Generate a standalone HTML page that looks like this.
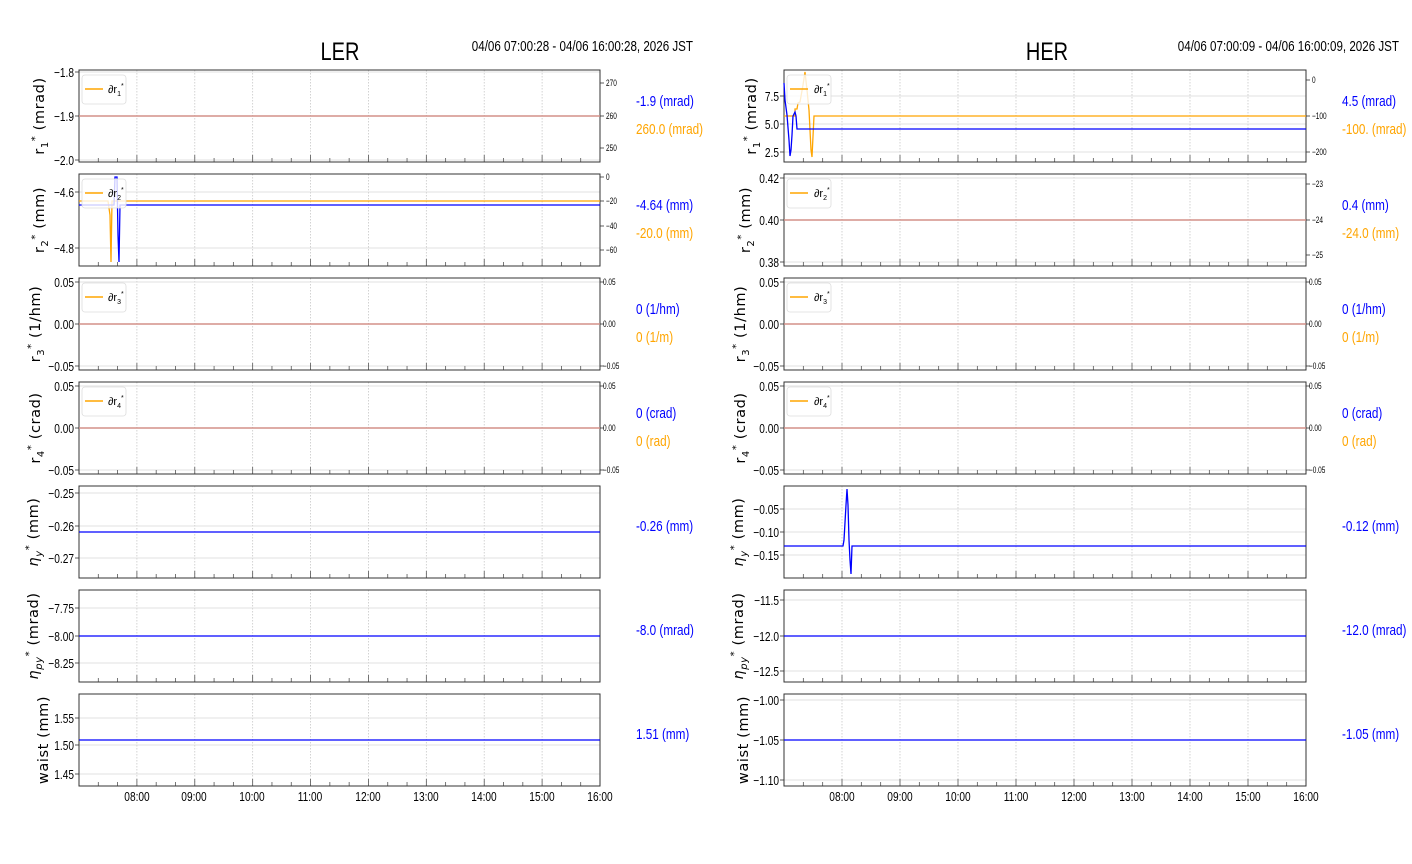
<!DOCTYPE html>
<html><head><meta charset="utf-8"><style>
html,body{margin:0;padding:0;background:#fff;}
svg{display:block}
text{font-family:"Liberation Sans",sans-serif;font-size:13px;fill:#000}
.sm text{font-size:9px}
.yl text{font-family:"DejaVu Sans",sans-serif;font-size:14.5px;letter-spacing:0.6px}
.t text{font-size:11px}
text.b{fill:#0000ff;font-size:15px}
text.o{fill:#ffa500;font-size:15px}
text.ttl{font-size:25px}
text.dt{font-size:14.5px}
</style></head><body>
<svg id="s" width="1412" height="864" xmlns="http://www.w3.org/2000/svg">
<g id="g"></g>
<text class="ttl n" x="340" y="60" text-anchor="middle">LER</text>
<text class="dt n" x="693" y="51" text-anchor="end">04/06 07:00:28 - 04/06 16:00:28, 2026 JST</text>
<text class="ttl n" x="1047" y="60" text-anchor="middle">HER</text>
<text class="dt n" x="1399" y="51" text-anchor="end">04/06 07:00:09 - 04/06 16:00:09, 2026 JST</text>

<g text-anchor="end" class="lt">
<text x="74" y="77">−1.8</text><text x="74" y="121">−1.9</text><text x="74" y="165">−2.0</text>
<text x="74" y="197">−4.6</text><text x="74" y="253">−4.8</text>
<text x="74" y="287">0.05</text><text x="74" y="329">0.00</text><text x="74" y="371">−0.05</text>
<text x="74" y="391">0.05</text><text x="74" y="433">0.00</text><text x="74" y="475">−0.05</text>
<text x="74" y="498">−0.25</text><text x="74" y="531">−0.26</text><text x="74" y="563">−0.27</text>
<text x="74" y="613">−7.75</text><text x="74" y="641">−8.00</text><text x="74" y="668">−8.25</text>
<text x="74" y="723">1.55</text><text x="74" y="750">1.50</text><text x="74" y="779">1.45</text>
<text x="779" y="101">7.5</text><text x="779" y="129">5.0</text><text x="779" y="157">2.5</text>
<text x="779" y="183">0.42</text><text x="779" y="225">0.40</text><text x="779" y="267">0.38</text>
<text x="779" y="287">0.05</text><text x="779" y="329">0.00</text><text x="779" y="371">−0.05</text>
<text x="779" y="391">0.05</text><text x="779" y="433">0.00</text><text x="779" y="475">−0.05</text>
<text x="779" y="514">−0.05</text><text x="779" y="537">−0.10</text><text x="779" y="560">−0.15</text>
<text x="779" y="605">−11.5</text><text x="779" y="641">−12.0</text><text x="779" y="676">−12.5</text>
<text x="779" y="705">−1.00</text><text x="779" y="745">−1.05</text><text x="779" y="785">−1.10</text>
</g>
<g class="sm">
<text x="606" y="86">270</text><text x="606" y="119">260</text><text x="606" y="151">250</text>
<text x="606" y="180">0</text><text x="606" y="204">−20</text><text x="606" y="229">−40</text><text x="606" y="253">−60</text>
<text x="603" y="285">0.05</text><text x="603" y="327">0.00</text><text x="603" y="369">−0.05</text>
<text x="603" y="389">0.05</text><text x="603" y="431">0.00</text><text x="603" y="473">−0.05</text>
<text x="1312" y="83">0</text><text x="1312" y="119">−100</text><text x="1312" y="155">−200</text>
<text x="1312" y="187">−23</text><text x="1312" y="223">−24</text><text x="1312" y="258">−25</text>
<text x="1309" y="285">0.05</text><text x="1309" y="327">0.00</text><text x="1309" y="369">−0.05</text>
<text x="1309" y="389">0.05</text><text x="1309" y="431">0.00</text><text x="1309" y="473">−0.05</text>
</g>
<g text-anchor="middle" class="xl">
<text x="137" y="801">08:00</text><text x="194" y="801">09:00</text><text x="252" y="801">10:00</text><text x="310" y="801">11:00</text><text x="368" y="801">12:00</text><text x="426" y="801">13:00</text><text x="484" y="801">14:00</text><text x="542" y="801">15:00</text><text x="600" y="801">16:00</text>
<text x="842" y="801">08:00</text><text x="900" y="801">09:00</text><text x="958" y="801">10:00</text><text x="1016" y="801">11:00</text><text x="1074" y="801">12:00</text><text x="1132" y="801">13:00</text><text x="1190" y="801">14:00</text><text x="1248" y="801">15:00</text><text x="1306" y="801">16:00</text>
</g>
<g class="yl" text-anchor="middle">
<text transform="translate(44,116) rotate(-90)">r<tspan dy="4" font-size="10">1</tspan><tspan dy="-10" font-size="10">*</tspan><tspan dy="6"> (mrad)</tspan></text>
<text transform="translate(44,220) rotate(-90)">r<tspan dy="4" font-size="10">2</tspan><tspan dy="-10" font-size="10">*</tspan><tspan dy="6"> (mm)</tspan></text>
<text transform="translate(40,324) rotate(-90)">r<tspan dy="4" font-size="10">3</tspan><tspan dy="-10" font-size="10">*</tspan><tspan dy="6"> (1/hm)</tspan></text>
<text transform="translate(40,428) rotate(-90)">r<tspan dy="4" font-size="10">4</tspan><tspan dy="-10" font-size="10">*</tspan><tspan dy="6"> (crad)</tspan></text>
<text transform="translate(38,532) rotate(-90)"><tspan font-style="italic">η</tspan><tspan dy="4" font-size="10" font-style="italic">y</tspan><tspan dy="-10" font-size="10">*</tspan><tspan dy="6"> (mm)</tspan></text>
<text transform="translate(38,636) rotate(-90)"><tspan font-style="italic">η</tspan><tspan dy="4" font-size="10" font-style="italic">py</tspan><tspan dy="-10" font-size="10">*</tspan><tspan dy="6"> (mrad)</tspan></text>
<text transform="translate(48,740) rotate(-90)">waist (mm)</text>
<text transform="translate(756,116) rotate(-90)">r<tspan dy="4" font-size="10">1</tspan><tspan dy="-10" font-size="10">*</tspan><tspan dy="6"> (mrad)</tspan></text>
<text transform="translate(750,220) rotate(-90)">r<tspan dy="4" font-size="10">2</tspan><tspan dy="-10" font-size="10">*</tspan><tspan dy="6"> (mm)</tspan></text>
<text transform="translate(745,324) rotate(-90)">r<tspan dy="4" font-size="10">3</tspan><tspan dy="-10" font-size="10">*</tspan><tspan dy="6"> (1/hm)</tspan></text>
<text transform="translate(745,428) rotate(-90)">r<tspan dy="4" font-size="10">4</tspan><tspan dy="-10" font-size="10">*</tspan><tspan dy="6"> (crad)</tspan></text>
<text transform="translate(743,532) rotate(-90)"><tspan font-style="italic">η</tspan><tspan dy="4" font-size="10" font-style="italic">y</tspan><tspan dy="-10" font-size="10">*</tspan><tspan dy="6"> (mm)</tspan></text>
<text transform="translate(743,636) rotate(-90)"><tspan font-style="italic">η</tspan><tspan dy="4" font-size="10" font-style="italic">py</tspan><tspan dy="-10" font-size="10">*</tspan><tspan dy="6"> (mrad)</tspan></text>
<text transform="translate(748,740) rotate(-90)">waist (mm)</text>
</g>
<g class="rv">
<text class="b" x="636" y="106">-1.9 (mrad)</text><text class="o" x="636" y="134">260.0 (mrad)</text>
<text class="b" x="636" y="210">-4.64 (mm)</text><text class="o" x="636" y="238">-20.0 (mm)</text>
<text class="b" x="636" y="314">0 (1/hm)</text><text class="o" x="636" y="342">0 (1/m)</text>
<text class="b" x="636" y="418">0 (crad)</text><text class="o" x="636" y="446">0 (rad)</text>
<text class="b" x="636" y="531">-0.26 (mm)</text>
<text class="b" x="636" y="635">-8.0 (mrad)</text>
<text class="b" x="636" y="739">1.51 (mm)</text>
<text class="b" x="1342" y="106">4.5 (mrad)</text><text class="o" x="1342" y="134">-100. (mrad)</text>
<text class="b" x="1342" y="210">0.4 (mm)</text><text class="o" x="1342" y="238">-24.0 (mm)</text>
<text class="b" x="1342" y="314">0 (1/hm)</text><text class="o" x="1342" y="342">0 (1/m)</text>
<text class="b" x="1342" y="418">0 (crad)</text><text class="o" x="1342" y="446">0 (rad)</text>
<text class="b" x="1342" y="531">-0.12 (mm)</text>
<text class="b" x="1342" y="635">-12.0 (mrad)</text>
<text class="b" x="1342" y="739">-1.05 (mm)</text>
</g>
<g id="lines"></g>
<g id="leg"></g>
<g class="t">
<text x="108" y="93">∂r<tspan dy="3" font-size="7">1</tspan><tspan dy="-8" font-size="7">*</tspan></text>
<text x="108" y="197">∂r<tspan dy="3" font-size="7">2</tspan><tspan dy="-8" font-size="7">*</tspan></text>
<text x="108" y="301">∂r<tspan dy="3" font-size="7">3</tspan><tspan dy="-8" font-size="7">*</tspan></text>
<text x="108" y="405">∂r<tspan dy="3" font-size="7">4</tspan><tspan dy="-8" font-size="7">*</tspan></text>
<text x="814" y="93">∂r<tspan dy="3" font-size="7">1</tspan><tspan dy="-8" font-size="7">*</tspan></text>
<text x="814" y="197">∂r<tspan dy="3" font-size="7">2</tspan><tspan dy="-8" font-size="7">*</tspan></text>
<text x="814" y="301">∂r<tspan dy="3" font-size="7">3</tspan><tspan dy="-8" font-size="7">*</tspan></text>
<text x="814" y="405">∂r<tspan dy="3" font-size="7">4</tspan><tspan dy="-8" font-size="7">*</tspan></text>
</g>
</svg>
<script>
var NS="http://www.w3.org/2000/svg";
function el(p,t,a){var e=document.createElementNS(NS,t);for(var k in a)e.setAttribute(k,a[k]);p.appendChild(e);return e;}
var g=document.getElementById('g'),L=document.getElementById('lines'),G=document.getElementById('leg');
var tops=[70,174,278,382,486,590,694];
var yt={0:[[72,116,160],[192,248],[282,324,366],[386,428,470],[493,526,558],[608,636,663],[718,745,774]],
1:[[96,124,152],[178,220,262],[282,324,366],[386,428,470],[509,532,555],[600,636,671],[700,740,780]]};
var rt={0:[[83,116,148],[177,201,226,250],[282,324,366],[386,428,470]],1:[[80,116,152],[184,220,255],[282,324,366],[386,428,470]]};
[[79,600,0],[784,1306,1]].forEach(function(c){
 var x0=c[0],x1=c[1],s=c[2],hw=(x1-x0)/9;
 tops.forEach(function(t,i){
  var b=t+92;
  for(var h=1;h<9;h++){var x=x0+h*hw;el(g,'line',{x1:x,x2:x,y1:t,y2:b,stroke:'#c8c8c8','stroke-width':0.8,'stroke-dasharray':'1.5,1.5'});}
  yt[s][i].forEach(function(y){el(g,'line',{x1:x0,x2:x1,y1:y,y2:y,stroke:'#d8d8d8','stroke-width':0.8});el(g,'line',{x1:x0-4,x2:x0,y1:y,y2:y,stroke:'#333','stroke-width':0.8});});
  for(var m=1;m<27;m++){var x=x0+m*hw/3,maj=m%3==0;el(g,'line',{x1:x,x2:x,y1:b,y2:b-(maj?7:4),stroke:'#555','stroke-width':0.8});}
  if(i<4){rt[s][i].forEach(function(y){el(g,'line',{x1:x1,x2:x1+4,y1:y,y2:y,stroke:'#333','stroke-width':0.8});});
   el(G,'rect',{x:x0+3,y:t+5,width:44,height:29,rx:3,fill:'rgba(255,255,255,0.8)',stroke:'#ddd','stroke-width':0.8});
   el(G,'line',{x1:x0+6,x2:x0+24,y1:t+19,y2:t+19,stroke:'#ffa500','stroke-width':1.5});}
  el(g,'rect',{x:x0,y:t,width:x1-x0,height:92,fill:'none',stroke:'#333','stroke-width':1});
 });
});
function pl(pts,c,w){el(L,'polyline',{points:pts,fill:'none',stroke:c,'stroke-width':w||1.3});}
function hl(x0,x1,y,c){pl(x0+','+y+' '+x1+','+y,c);}
hl(79,600,116,'#0000ff');hl(79,600,116,'#f0a070');
pl('79,201 108,201 110,215 111,262 112,201 600,201','#ffa500');
pl('79,205 114,205 115,177 117,177 118,235 119,262 120,205 600,205','#0000ff');
hl(79,600,324,'#0000ff');hl(79,600,324,'#f0a070');
hl(79,600,428,'#0000ff');hl(79,600,428,'#f0a070');
hl(79,600,532,'#0000ff');hl(79,600,636,'#0000ff');hl(79,600,740,'#0000ff');
pl('784,116 795,116 795,109 797,109 798,103 800,102 803,85 805,72 807,90 809,110 811,150 812,157 814,116 1306,116','#ffa500');
pl('784,83 785,100 787,115 789,140 790,156 791,150 792,135 793,116 795,112 796,116 797,129 1306,129','#0000ff');
hl(784,1306,220,'#0000ff');hl(784,1306,220,'#f0a070');
hl(784,1306,324,'#0000ff');hl(784,1306,324,'#f0a070');
hl(784,1306,428,'#0000ff');hl(784,1306,428,'#f0a070');
pl('784,546 843,546 844,540 846,505 847,489 848,505 849,540 850,560 851,574 852,546 1306,546','#0000ff');
hl(784,1306,636,'#0000ff');hl(784,1306,740,'#0000ff');
function cond(sel,f){document.querySelectorAll(sel).forEach(function(t){var w=t.getComputedTextLength();t.setAttribute('textLength',(w*f).toFixed(1));t.setAttribute('lengthAdjust','spacingAndGlyphs');});}
cond('text.n',0.8);cond('.lt text',0.78);cond('.xl text',0.78);cond('.rv text',0.78);cond('.sm text',0.72);
</script>
</body></html>
